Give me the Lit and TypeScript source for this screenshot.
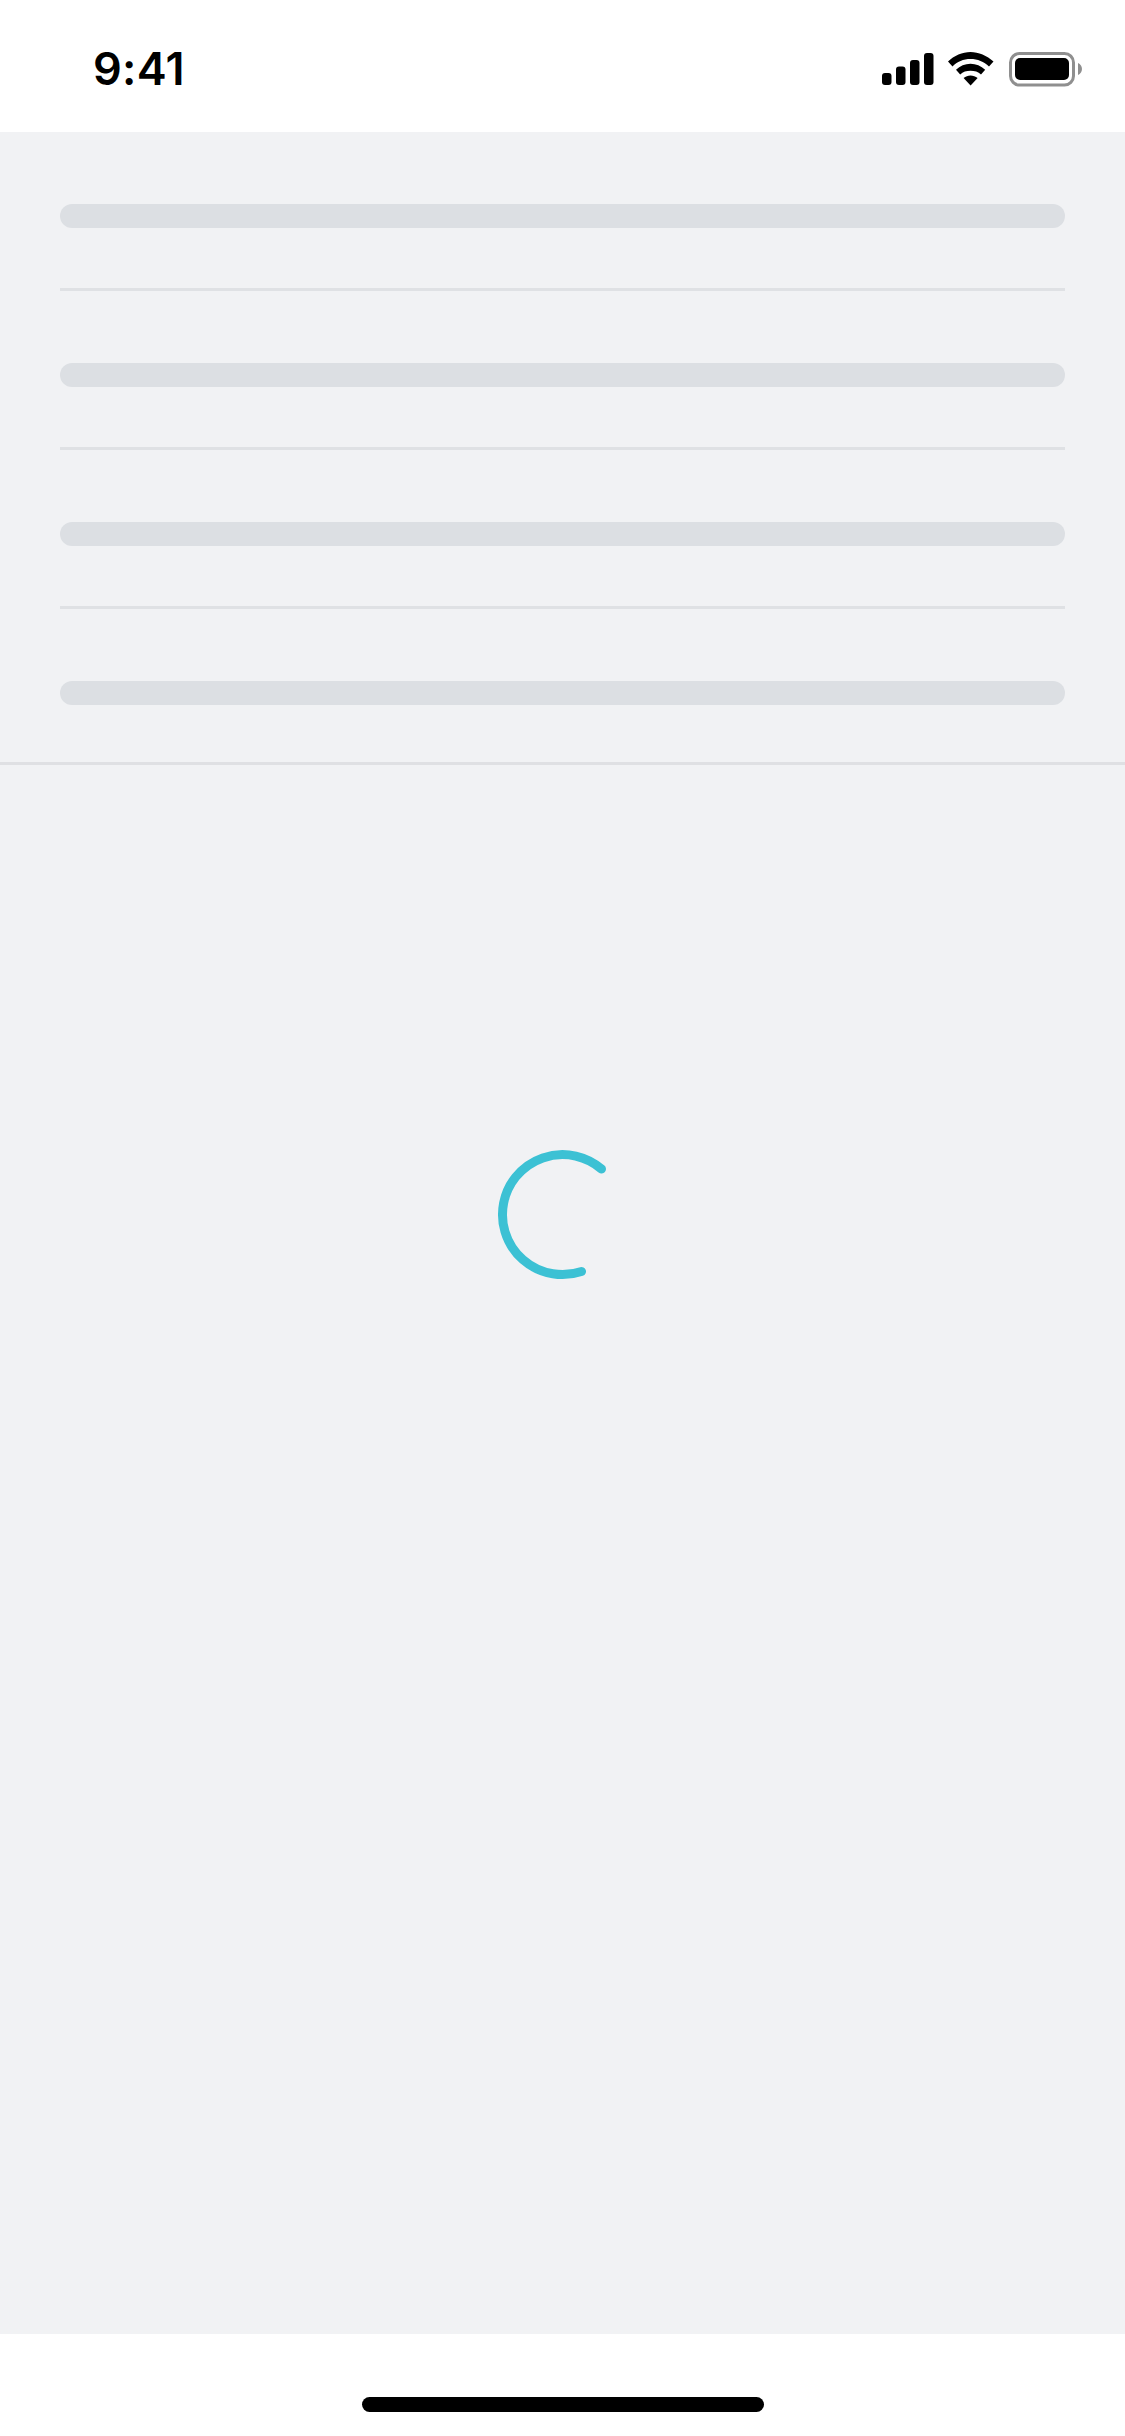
import { LitElement, html, css } from "lit";
import { customElement } from "lit/decorators.js";

@customElement("app-root")
export class AppRoot extends LitElement {
  static styles = css`
    :host {
      display: flex;
      flex-direction: column;
      width: 1125px;
      height: 2436px;
      background: #fff;
      font-family: Inter, "Liberation Sans", sans-serif;
    }
    .status {
      flex: none;
      height: 132px;
      display: flex;
      justify-content: space-between;
      background: #fff;
    }
    .time {
      margin: 41px 0 0 93px;
      font-size: 45px;
      line-height: 56px;
      font-weight: 600;
      letter-spacing: 0.3px;
      color: #000;
    }
    .indicators {
      display: block;
      margin: 50px 41px 0 0;
    }
    .content {
      flex: 1;
      display: flex;
      flex-direction: column;
      background: #f1f2f4;
    }
    .list {
      display: flex;
      flex-direction: column;
      padding: 72px 60px 57px;
      border-bottom: 3px solid #dfe0e3;
    }
    .bar {
      height: 24px;
      border-radius: 12px;
      background: #dcdfe3;
    }
    .rule {
      height: 3px;
      margin: 60px 0 72px;
      background: #dfe1e4;
    }
    .loading {
      display: flex;
      justify-content: center;
      padding-top: 384px;
    }
    .footer {
      flex: none;
      height: 102px;
      display: flex;
      justify-content: center;
      background: #fff;
    }
    .home {
      width: 402px;
      height: 15px;
      margin-top: 63px;
      border-radius: 8px;
      background: #000;
    }
  `;

  render() {
    const rows = [0, 1, 2, 3];
    return html`
      <div class="status">
        <div class="time">9:41</div>
        <svg class="indicators" width="204" height="38" viewBox="880 50 204 38" fill="#000">
          <rect x="882" y="73" width="9.5" height="12" rx="3" />
          <rect x="896" y="66.5" width="9.5" height="18.5" rx="3" />
          <rect x="910" y="60" width="9.5" height="25" rx="3" />
          <rect x="924" y="53" width="9.5" height="32" rx="3" />
          <path d="M948 61.6C954 55.6 962.5 52 970.5 52S987 55.6 993.5 61.6L989 66.4C984 61.6 977.5 59 970.5 59S957 61.6 952.5 66.4Z" />
          <path d="M956 69.8C960 66 965 63.8 970.5 63.8S981 66 985.2 69.8L981 74.4C978.2 71.9 974.6 70.8 970.5 70.8S963 71.9 960.2 74.4Z" />
          <path d="M963.6 78C965.6 76.2 968 75.4 970.5 75.4S975.6 76.2 977.6 78L970.6 85.4Z" />
          <rect x="1010.5" y="53.5" width="63" height="31.5" rx="9" fill="none" stroke="#8f8f8f" stroke-width="3" />
          <rect x="1015" y="58" width="54" height="22" rx="5" />
          <path d="M1078 63C1080.5 64 1082 66.5 1082 69S1080.5 74 1078 75Z" fill="#8f8f8f" />
        </svg>
      </div>
      <div class="content">
        <div class="list">
          ${rows.map(
            (i) => html`<div class="bar"></div>${i < 3 ? html`<div class="rule"></div>` : ""}`
          )}
        </div>
        <div class="loading">
          <svg width="131" height="131" viewBox="0 0 131 131" fill="none">
            <path
              d="M104.5 20A60 60 0 1 0 84.5 122.5"
              stroke="#3cc1d4"
              stroke-width="9"
              stroke-linecap="round"
            />
          </svg>
        </div>
      </div>
      <div class="footer"><div class="home"></div></div>
    `;
  }
}
